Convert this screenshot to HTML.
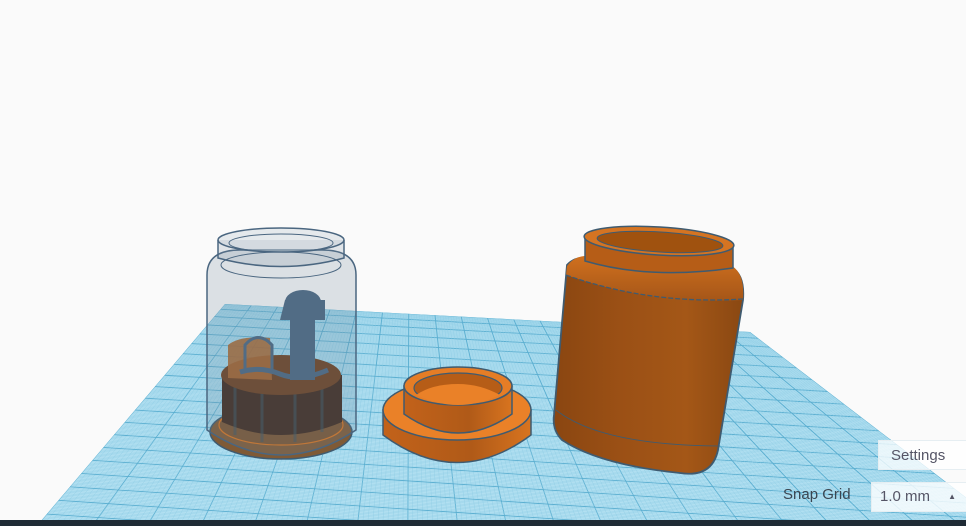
<!DOCTYPE html>
<html><head><style>
html,body{margin:0;padding:0;background:#fafafa;width:966px;height:526px;overflow:hidden;font-family:"Liberation Sans",sans-serif}
svg{position:absolute;left:0;top:0}
.set{position:absolute;left:878px;top:440px;width:88px;height:30px;background:rgba(255,255,255,.75);border:1px solid #e6eef2;border-right:none;color:#556;font-size:15px;line-height:30px;text-indent:12px;box-sizing:border-box}
.sg{position:absolute;left:783px;top:486px;color:#3a4550;font-size:15px}
.sel{position:absolute;left:871px;top:482px;width:95px;height:30px;background:rgba(255,255,255,.8);border:1px solid #e6eef2;border-right:none;color:#556;font-size:15px;line-height:28px;text-indent:8px;box-sizing:border-box}
.sel span{position:absolute;right:10px;top:0;font-size:8px}
</style></head><body>
<svg width="966" height="526" id="s">
<defs>
<clipPath id="gc"><polygon points="225,304 750,332 1100,600 35,528"/></clipPath>
<linearGradient id="bj" x1="0" x2="1"><stop offset="0" stop-color="#8a4611"/><stop offset=".35" stop-color="#9b5015"/><stop offset=".7" stop-color="#a45717"/><stop offset="1" stop-color="#8a4812"/></linearGradient>
<linearGradient id="sh" x1="0" x2="0" y1="0" y2="1"><stop offset="0" stop-color="#d0701e"/><stop offset="1" stop-color="#a55618"/></linearGradient>
<linearGradient id="ls" x1="0" x2="1"><stop offset="0" stop-color="#c2621a"/><stop offset=".6" stop-color="#b05a18"/><stop offset="1" stop-color="#d8741f"/></linearGradient>
</defs>
<polygon points="225,304 750,332 1100,600 35,528" fill="#b4e1f2"/>
<g id="lines" clip-path="url(#gc)"></g>
<rect x="0" y="520" width="966" height="6" fill="#1f2b35"/>
<!-- left jar -->
<ellipse cx="281" cy="432" rx="71" ry="27" fill="#7f5a36" stroke="#3f5b70" stroke-width="1.5"/>
<ellipse cx="281" cy="425" rx="62" ry="20" fill="#7a5532" stroke="#d8741f" stroke-width="1.2"/>
<path d="M222,375 L222,422 Q281,448 342,422 L342,375 Z" fill="#3f2a1e"/>
<path d="M235,380 v55 M262,385 v57 M295,385 v57 M322,380 v52" stroke="#3c5666" stroke-width="3" opacity=".5"/>
<ellipse cx="281" cy="375" rx="60" ry="20" fill="#6e4120"/>
<path d="M228,345 Q240,335 270,338 L272,380 L228,378z" fill="#a76630" opacity=".9"/>
<path d="M245,345 Q258,330 272,345 v25 h-27z" fill="none" stroke="#4a6680" stroke-width="3"/>
<path d="M285,300 h40 v20 h-10 v60 h-25 v-60 h-10z" fill="#4a6680"/>
<ellipse cx="303" cy="302" rx="18" ry="12" fill="#4a6680"/>
<path d="M240,372 q20,-6 40,2 q20,8 48,-4" fill="none" stroke="#4a6680" stroke-width="5"/>
<path d="M207,275 Q207,250 240,250 L322,250 Q356,250 356,275 L356,430 Q281,480 207,430 Z" fill="rgba(110,130,150,.22)" stroke="#4a6680" stroke-width="1.5"/>
<path d="M218,240 L218,258 Q281,275 344,258 L344,240" fill="rgba(120,140,160,.2)" stroke="#4a6680" stroke-width="1.5"/>
<ellipse cx="281" cy="240" rx="63" ry="12" fill="rgba(190,200,210,.35)" stroke="#4a6680" stroke-width="1.5"/>
<ellipse cx="281" cy="243" rx="52" ry="9" fill="none" stroke="#4a6680"/>
<ellipse cx="281" cy="265" rx="60" ry="13" fill="none" stroke="#4a6680"/>
<!-- lid -->
<path d="M383,410 L383,435 Q457,490 531,435 L531,410 Z" fill="url(#ls)" stroke="#3f5b70" stroke-width="1.5"/>
<ellipse cx="457" cy="410" rx="74" ry="30" fill="#ea8128" stroke="#3f5b70" stroke-width="1.5"/>
<path d="M404,386 L404,414 Q458,452 512,414 L512,386 Z" fill="url(#ls)" stroke="#3f5b70" stroke-width="1.5"/>
<ellipse cx="458" cy="386" rx="54" ry="19" fill="#e57d26" stroke="#3f5b70" stroke-width="1.5"/>
<ellipse cx="458" cy="388" rx="44" ry="15" fill="#b65d17" stroke="#3f5b70" stroke-width="1.2"/>
<path d="M416,395 Q458,415 500,395 Q480,384 458,384 Q432,384 416,395Z" fill="#ea8128"/>
<!-- right jar -->
<path d="M567,265 Q575,256 590,258 L732,268 Q745,275 743,300 L718,450 Q712,478 680,473 Q600,465 562,440 Q552,430 554,415 Z" fill="url(#bj)" stroke="#3f5b70" stroke-width="1.8"/>
<path d="M567,266 Q575,255 590,256 L732,266 Q745,274 743,300 Q650,305 566,275 Z" fill="url(#sh)"/>
<path d="M566,275 Q650,305 743,299" fill="none" stroke="#3f5b70" stroke-width="1.3" stroke-dasharray="5 2"/>
<path d="M556,410 Q600,445 718,446" fill="none" stroke="#3f5b70" stroke-width=".8"/>
<path d="M585,236 L585,261 Q650,280 733,268 L733,244 Z" fill="#b65d17" stroke="#3f5b70" stroke-width="1.5"/>
<ellipse cx="659" cy="241" rx="75" ry="14" transform="rotate(3.5 659 241)" fill="#d57422" stroke="#3f5b70" stroke-width="1.5"/>
<ellipse cx="660" cy="242" rx="63" ry="10" transform="rotate(3.5 660 242)" fill="#a0520f" stroke="#3f5b70"/>
</svg>
<div class="set">Settings</div>
<div class="sg">Snap Grid</div>
<div class="sel">1.0 mm<span>▲</span></div>
<script>
var g=document.getElementById('lines'),ns='http://www.w3.org/2000/svg';
var TL=[225,304],TR=[750,332],BR=[1100,600],BL=[35,528];
function L(a,b,t){return [a[0]+(b[0]-a[0])*t,a[1]+(b[1]-a[1])*t]}
function ln(p,q,c,w){var e=document.createElementNS(ns,'line');e.setAttribute('x1',p[0]);e.setAttribute('y1',p[1]);e.setAttribute('x2',q[0]);e.setAttribute('y2',q[1]);e.setAttribute('stroke',c);e.setAttribute('stroke-width',w);g.appendChild(e)}
var N=200;
for(var i=0;i<=N;i++){var t=i/N;var maj=i%10==0;
var c=maj?'#5aaed0':'#8ccbe4',w=maj?0.9:0.35;
ln(L(TL,TR,t),L(BL,BR,t),c,w);
var tt=Math.pow(t,1.25);
ln(L(TL,BL,tt),L(TR,BR,tt),c,w);}
</script>
</body></html>
